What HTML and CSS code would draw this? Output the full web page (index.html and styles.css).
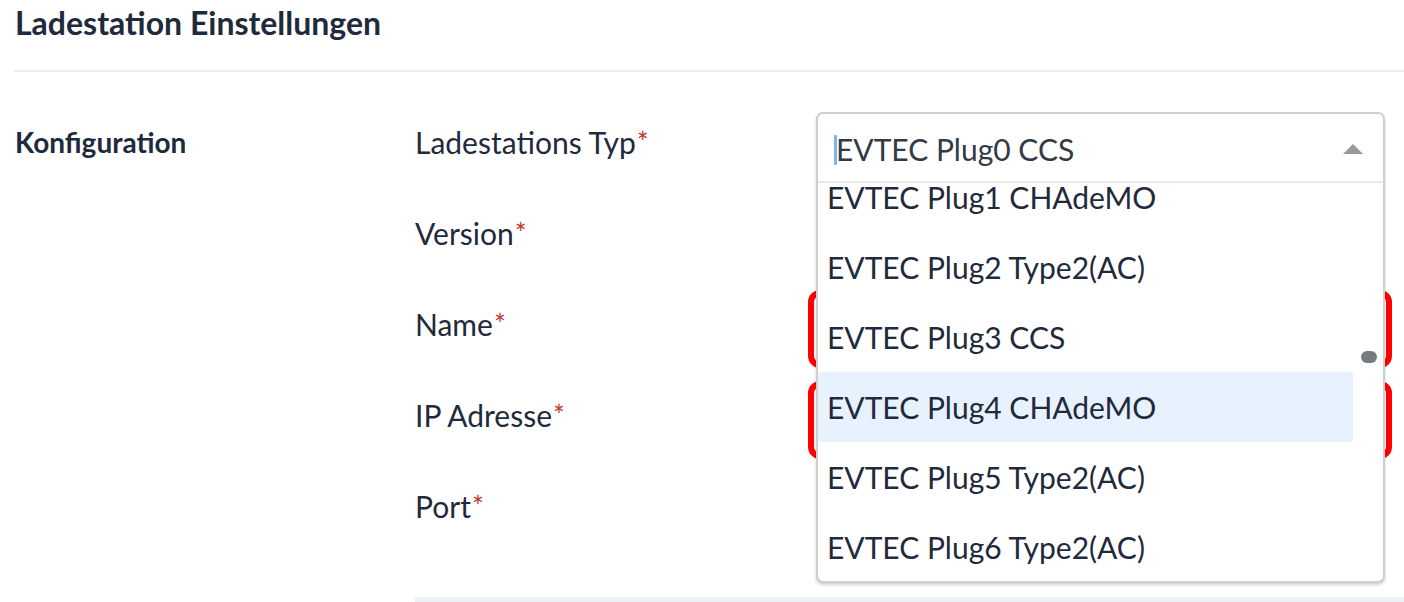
FILE: index.html
```html
<!DOCTYPE html>
<html lang="de">
<head>
<meta charset="utf-8">
<title>Ladestation Einstellungen</title>
<link rel="stylesheet" href="styles.css">
</head>
<body>
<div class="page">
  <h1 class="title">Ladestation Einstellungen</h1>
  <div class="divider"></div>
  <section class="section">
    <div class="section-name">Konfiguration</div>
    <div class="form">
      <div class="label">Ladestations Typ<span class="req">*</span></div>
      <div class="field">
        <div class="select-open">
          <div class="select-head">
            <span class="caret"></span>
            <span class="select-value">EVTEC Plug0 CCS</span>
            <span class="arrow"></span>
          </div>
          <div class="menu">
            <div class="menu-list">
              <div class="option">EVTEC Plug1 CHAdeMO</div>
              <div class="option">EVTEC Plug2 Type2(AC)</div>
              <div class="option">EVTEC Plug3 CCS</div>
              <div class="option active">EVTEC Plug4 CHAdeMO</div>
              <div class="option">EVTEC Plug5 Type2(AC)</div>
              <div class="option">EVTEC Plug6 Type2(AC)</div>
            </div>
            <div class="scroll-thumb"></div>
          </div>
        </div>
      </div>

      <div class="label">Version<span class="req">*</span></div>
      <div class="input"></div>

      <div class="label">Name<span class="req">*</span></div>
      <div class="input invalid"></div>

      <div class="label">IP Adresse<span class="req">*</span></div>
      <div class="input invalid"></div>

      <div class="label">Port<span class="req">*</span></div>
      <div class="input"></div>
    </div>
  </section>
  <div class="bottom-line"></div>
</div>
</body>
</html>
```

FILE: styles.css
```css
* { box-sizing: border-box; }
html, body {
  margin: 0;
  padding: 0;
  background: #ffffff;
}
body {
  font-family: Lato, "Noto Sans", sans-serif;
  color: #1f2a3c;
  width: 1404px;
  height: 602px;
  overflow: hidden;
}
.page {
  padding-left: 14px;
}
.title {
  margin: 0;
  padding: 3px 0 0 1px;
  height: 70px;
  font-size: 32px;
  line-height: 40px;
  font-weight: 700;
  color: #1f2a3c;
}
.divider {
  height: 2px;
  background: #ebebeb;
}
.section {
  display: grid;
  grid-template-columns: 401px 1fr;
  padding-top: 40px;
}
.section-name {
  padding: 12px 0 0 1px;
  font-size: 28px;
  line-height: 36px;
  font-weight: 700;
}
.form {
  display: grid;
  grid-template-columns: 401px 569px;
  grid-auto-rows: 70px;
  row-gap: 21px;
}
.label {
  padding-top: 11px;
  font-size: 30px;
  line-height: 38px;
  color: #1f2a3c;
}
.req {
  color: #c0392b;
  font-size: 28px;
  margin-left: 1px;
  vertical-align: 1px;
}
.input {
  border: 2px solid #d0d0d0;
  border-radius: 6px;
  background: #fff;
}
.input.invalid {
  margin: -4px -7px -4px -8px;
  border: 6px solid #ff0000;
  border-radius: 12px;
}
.field {
  position: relative;
  z-index: 2;
}
.select-open {
  position: absolute;
  left: 0;
  top: 0;
  width: 569px;
  height: 471px;
  border: 2px solid #cfcfcf;
  border-radius: 7px;
  background: #fff;
  box-shadow: 0 2px 3px rgba(0, 0, 0, 0.18);
  overflow: hidden;
  display: flex;
  flex-direction: column;
}
.select-head {
  height: 69px;
  flex: none;
  border-bottom: 2px solid #e9e9e9;
  display: flex;
  align-items: center;
  padding-left: 18px;
  padding-right: 20px;
  position: relative;
}
.caret {
  width: 3px;
  height: 30px;
  background: #7fb2f0;
  border-radius: 1px;
  position: absolute;
  left: 16px;
  top: 21px;
}
.select-value {
  flex: 1;
  font-size: 30px;
  line-height: 38px;
  color: #333a45;
  padding-top: 2px;
}
.arrow {
  width: 0;
  height: 0;
  border-left: 10px solid transparent;
  border-right: 10px solid transparent;
  border-bottom: 10px solid #9a9a9a;
  margin-top: 2px;
}
.menu {
  flex: 1;
  position: relative;
  overflow: hidden;
}
.menu-list {
  margin-top: -21px;
  width: 535px;
}
.option {
  height: 70px;
  display: flex;
  align-items: center;
  padding-left: 9px;
  font-size: 30px;
  line-height: 38px;
  color: #1f2a3c;
}
.option.active {
  background: #e8f2fe;
}
.scroll-thumb {
  position: absolute;
  left: 543px;
  top: 168px;
  width: 16px;
  height: 12px;
  border-radius: 6px;
  background: #777b80;
}
.bottom-line {
  margin-left: 401px;
  margin-top: 51px;
  height: 6px;
  background: #eef0f8;
}
```
